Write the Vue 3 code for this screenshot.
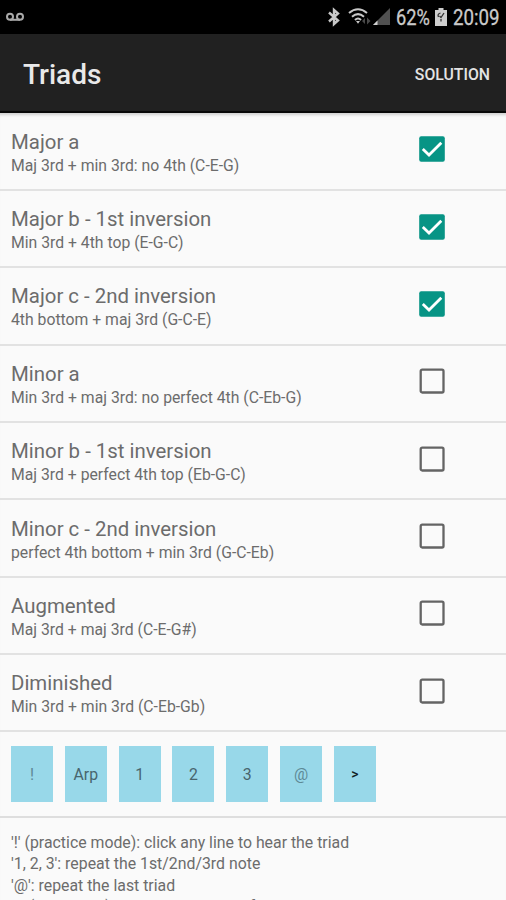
<script setup>
import { ref } from 'vue'

const triads = ref([
  { name: 'Major a', hint: 'Maj 3rd + min 3rd: no 4th (C-E-G)', on: true },
  { name: 'Major b - 1st inversion', hint: 'Min 3rd + 4th top (E-G-C)', on: true },
  { name: 'Major c - 2nd inversion', hint: '4th bottom + maj 3rd (G-C-E)', on: true },
  { name: 'Minor a', hint: 'Min 3rd + maj 3rd: no perfect 4th (C-Eb-G)', on: false },
  { name: 'Minor b - 1st inversion', hint: 'Maj 3rd + perfect 4th top (Eb-G-C)', on: false },
  { name: 'Minor c - 2nd inversion', hint: 'perfect 4th bottom + min 3rd (G-C-Eb)', on: false },
  { name: 'Augmented', hint: 'Maj 3rd + maj 3rd (C-E-G#)', on: false },
  { name: 'Diminished', hint: 'Min 3rd + min 3rd (C-Eb-Gb)', on: false }
])
const keys = ['!', 'Arp', '1', '2', '3', '@', '>']
const help = [
  "'!' (practice mode): click any line to hear the triad",
  "'1, 2, 3': repeat the 1st/2nd/3rd note",
  "'@': repeat the last triad",
  "'>' (test mode): guess which one of the triads was played with"
]
</script>

<template>
  <div class="screen">
    <div class="status">
      <svg class="voicemail" width="18" height="10" viewBox="0 0 18 10" fill="none" stroke="#a9a9a9" stroke-width="2">
        <circle cx="4" cy="4.7" r="3" /><circle cx="14" cy="4.7" r="3" /><path d="M4 7.8H14" />
      </svg>
      <div class="indicators">
        <svg class="bt" width="12" height="20" viewBox="0 0 12 20" fill="none" stroke="#c8c8c8" stroke-width="2.4">
          <path d="M1 5.500 10 13.500 6 17V3L10 6.500 1 14.500" />
        </svg>
        <svg class="wifi" width="24" height="18" viewBox="0 0 24 18" fill="none" stroke="#c8c8c8" stroke-width="2">
          <path d="M1 5Q10-2.500 19 5M4 8.700Q10 3.500 16 8.700M7 12Q10 9 13 12" />
          <path d="M8 13h4l-2 2.700z" fill="#c8c8c8" stroke="none" />
          <path d="M17 10v6l-3-3zM19 9.500l3.500 3.500-3.500 3.500z" fill="#484848" stroke="none" />
        </svg>
        <svg class="signal" width="17" height="18" viewBox="0 0 17 18">
          <path d="M17 0V17H0z" fill="#505050" /><path d="M4.500 12.500V17H0z" fill="#d0d0d0" />
        </svg>
        <span class="pct"><span class="narrow">62%</span></span>
        <svg class="battery" width="12" height="18" viewBox="0 0 12 18">
          <path d="M3.500 0h5v2H12v16H0V2h3.500z" fill="#cecece" />
          <path d="M3.500 9Q2 6 5.500 5M9 5 6 9.500 4.500 8M6 11v2.500" fill="none" stroke="#333" stroke-width="1.300" />
        </svg>
        <span class="clock"><span class="narrow">20:09</span></span>
      </div>
    </div>
    <header class="bar">
      <h1>Triads</h1>
      <button class="solution">SOLUTION</button>
    </header>
    <main>
      <div v-for="t in triads" :key="t.name" class="row" @click="t.on = !t.on">
        <div class="texts">
          <div class="name">{{ t.name }}</div>
          <div class="hint">{{ t.hint }}</div>
        </div>
        <svg class="check" width="26" height="26" viewBox="0 0 26 26">
          <template v-if="t.on">
            <rect x=".2" y=".2" width="25.600" height="25.600" rx="2" fill="#079485" />
            <path d="M3.800 13 10 19 22.300 6.700" fill="none" stroke="#fff" stroke-width="2.800" />
          </template>
          <rect v-else x="1.700" y="1.700" width="22.800" height="22.800" rx="1.500" fill="none" stroke="#646464" stroke-width="2.300" />
        </svg>
      </div>
      <div class="keys">
        <button v-for="k in keys" :key="k" :class="{ strong: k === '>', faint: k === '!' || k === '@' }">{{ k }}</button>
      </div>
      <div class="help">
        <div v-for="h in help" :key="h">{{ h }}</div>
      </div>
    </main>
  </div>
</template>

<style>
body {
  margin: 0;
  overflow: hidden;
  background: #fafafa;
}
</style>

<style scoped>
.screen {
  width: 506px;
  height: 900px;
  overflow: hidden;
  background: #fafafa;
  font-family: Roboto, sans-serif;
  color: #6c6c6c;
}
button {
  border: 0;
  padding: 0;
  font-family: inherit;
}
.status {
  box-sizing: border-box;
  height: 34px;
  padding: 0 6px;
  background: #000;
  color: #cacaca;
  display: flex;
  justify-content: space-between;
  align-items: center;
}
.indicators {
  display: flex;
  align-items: center;
}
.wifi { margin-left: 8px; }
.signal { margin-left: 1px; }
.pct, .clock {
  font-size: 21.500px;
  line-height: 37px;
  white-space: nowrap;
}
.narrow {
  display: inline-block;
  transform-origin: left center;
  -webkit-text-stroke: 0.3px currentColor;
}
.pct .narrow { transform: scaleX(.85); }
.clock .narrow { transform: scaleX(.87); }
.pct {
  margin-left: 6px;
  width: 35px;
}
.battery { margin-left: 4px; }
.clock {
  margin-left: 6px;
  width: 47px;
}
.bar {
  box-sizing: border-box;
  height: 79px;
  padding: 0 16px 0 23px;
  background: #212121;
  border-bottom: 2px solid #080808;
  display: flex;
  align-items: center;
  justify-content: space-between;
}
h1 {
  margin: 5px 0 0;
  font-size: 28px;
  line-height: 32px;
  font-weight: 500;
  color: #e9e9e9;
}
.solution {
  margin-top: 3px;
  background: none;
  font-size: 15.800px;
  font-weight: 500;
  color: #e4e4e4;
}
main {
  padding-top: 0.600px;
  box-shadow: inset 0 4px 3px -2px #d0d0d0;
}
.row {
  box-sizing: border-box;
  height: 77.350px;
  padding: 15.200px 61px 0 11px;
  border-bottom: 2px solid #e2e2e2;
  display: flex;
  justify-content: space-between;
}
.check {
  margin-top: 7.500px;
}
.name {
  font-size: 20.400px;
  line-height: 26px;
  white-space: nowrap;
}
.hint {
  font-size: 15.750px;
  line-height: 22.600px;
  white-space: nowrap;
}
.keys {
  box-sizing: border-box;
  height: 86px;
  padding-left: 11px;
  border-bottom: 2px solid #dedede;
  display: flex;
  align-items: center;
  gap: 11.800px;
}
.keys button {
  width: 42px;
  height: 56px;
  background: #98d8e9;
  color: #48656d;
  font-size: 15.800px;
}
.keys .faint { color: #5e8996; }
.keys .strong {
  color: #102024;
  font-weight: 500;
  font-size: 14px;
}
.help {
  padding: 13.500px 11px 0;
  font-size: 15.850px;
  line-height: 21.400px;
  white-space: nowrap;
}
</style>
